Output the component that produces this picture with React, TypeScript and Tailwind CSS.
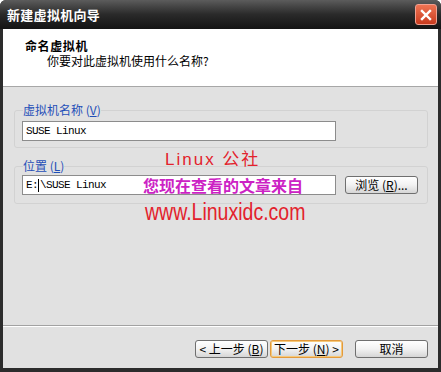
import React from "react"

const cjk = { fontFamily: '"Noto Sans CJK SC", "Liberation Sans", sans-serif' }
const mono = { fontFamily: '"Liberation Mono", "Noto Sans CJK SC", monospace' }

function U({ children }: { children: React.ReactNode }) {
  return <span className="underline underline-offset-1">{children}</span>
}

function XpButton({
  children,
  focused = false,
  className = "",
}: {
  children: React.ReactNode
  focused?: boolean
  className?: string
}) {
  return (
    <button
      className={`h-[18px] rounded-[3px] border text-[12px] leading-[14px] text-black flex items-center justify-center bg-gradient-to-b from-[#ffffff] via-[#f2f2f2] to-[#d6d6d6] ${
        focused ? "border-[#e39a3c] shadow-[inset_0_0_0_1px_#f6c97a]" : "border-[#6f6f6f]"
      } ${className}`}
      style={cjk}
    >
      {children}
    </button>
  )
}

export default function App() {
  return (
    <div className="w-[441px] h-[372px] bg-[#2c2c2c] flex flex-col overflow-hidden rounded-t-[6px]" style={cjk}>
      {/* Title bar */}
      <div className="h-[29px] shrink-0 flex items-center justify-between pl-[7px] pr-[4px] bg-gradient-to-b from-[#5c5c5c] via-[#2a2a2a] to-[#141414]">
        <span className="text-white text-[13px] font-bold leading-none tracking-[0.3px]">新建虚拟机向导</span>
        <div className="w-[22px] h-[21px] rounded-[3px] border border-[#f0a090] bg-gradient-to-b from-[#ee7352] to-[#c93a1d] flex items-center justify-center">
          <svg width="12" height="12" viewBox="0 0 12 12">
            <path d="M2 2 L10 10 M10 2 L2 10" stroke="white" strokeWidth="2.4" strokeLinecap="square" />
          </svg>
        </div>
      </div>

      {/* Frame */}
      <div className="flex-1 flex flex-col border-x-[3px] border-b-[4px] border-[#2c2c2c] shadow-[inset_1px_0_0_#7a7a7a,inset_-1px_0_0_#7a7a7a]">
        {/* Header */}
        <div className="h-[58px] shrink-0 bg-white border-b border-[#a7a7a7] pt-[10px] pl-[22px]">
          <div className="text-[12px] font-bold leading-[14px] tracking-[0.6px] text-black">命名虚拟机</div>
          <div className="text-[12px] leading-[14px] text-black pl-[22px] mt-[1px]">你要对此虚拟机使用什么名称?</div>
        </div>

        {/* Body */}
        <div className="flex-1 relative bg-[#e1e1e1] pt-[16px] pl-[11px] pr-[10px] border-b border-[#a2a2a2]">
          <fieldset className="rounded-[3px] border border-[#d2d2d2] pl-[7px] pt-[4px] pb-[6px]">
            <legend className="ml-px px-0 text-[12px] leading-[14px] text-[#1f4fb8]">
              虚拟机名称 (<U>V</U>)
            </legend>
            <div className="w-[314px] h-[20px] bg-white border border-[#8c8c8c] flex items-center pl-[3px]">
              <span className="text-[11px] tracking-[-0.6px] text-black" style={mono}>SUSE Linux</span>
            </div>
          </fieldset>

          <fieldset className="mt-[11px] rounded-[3px] border border-[#d2d2d2] pl-[7px] pt-[2px] pb-[8px]">
            <legend className="ml-px px-0 text-[12px] leading-[14px] text-[#1f4fb8]">
              位置 (<U>L</U>)
            </legend>
            <div className="flex items-center gap-[9px]">
              <div className="w-[314px] h-[20px] bg-white border border-[#8c8c8c] flex items-center pl-[3px]">
                <span className="text-[11px] tracking-[-0.6px] text-black flex items-center" style={mono}>
                  E:<span className="inline-block w-px h-[13px] bg-black mr-px" />\SUSE Linux
                </span>
              </div>
              <XpButton className="w-[73px]">
                浏览 (<U>R</U>)...
              </XpButton>
            </div>
          </fieldset>

          {/* Watermark */}
          <div className="absolute left-[162px] top-[63px] text-[17px] leading-[20px] tracking-[2px] text-[#e3222c]" style={{ fontFamily: '"Liberation Sans", "Noto Sans CJK SC", sans-serif' }}>
            Linux 公社
          </div>
          <div className="absolute left-[140px] top-[88px] text-[16px] leading-[20px] font-bold text-[#cc22c4]">
            您现在查看的文章来自
          </div>
          <div className="absolute left-[142px] top-[112px] text-[19.5px] leading-[22px] text-[#e3222c] scale-y-[1.18] origin-top-left" style={{ fontFamily: '"Liberation Sans", sans-serif' }}>
            www.Linuxidc.com
          </div>
        </div>

        {/* Footer */}
        <div className="h-[42px] shrink-0 bg-[#e1e1e1] border-t border-white flex items-start justify-end pt-[13px] pr-[10px]">
          <XpButton className="w-[73px]">
            &lt; 上一步 (<U>B</U>)
          </XpButton>
          <XpButton focused className="w-[73px] ml-[2px]">
            下一步 (<U>N</U>) &gt;
          </XpButton>
          <XpButton className="w-[73px] ml-[12px]">取消</XpButton>
        </div>
      </div>
    </div>
  )
}
